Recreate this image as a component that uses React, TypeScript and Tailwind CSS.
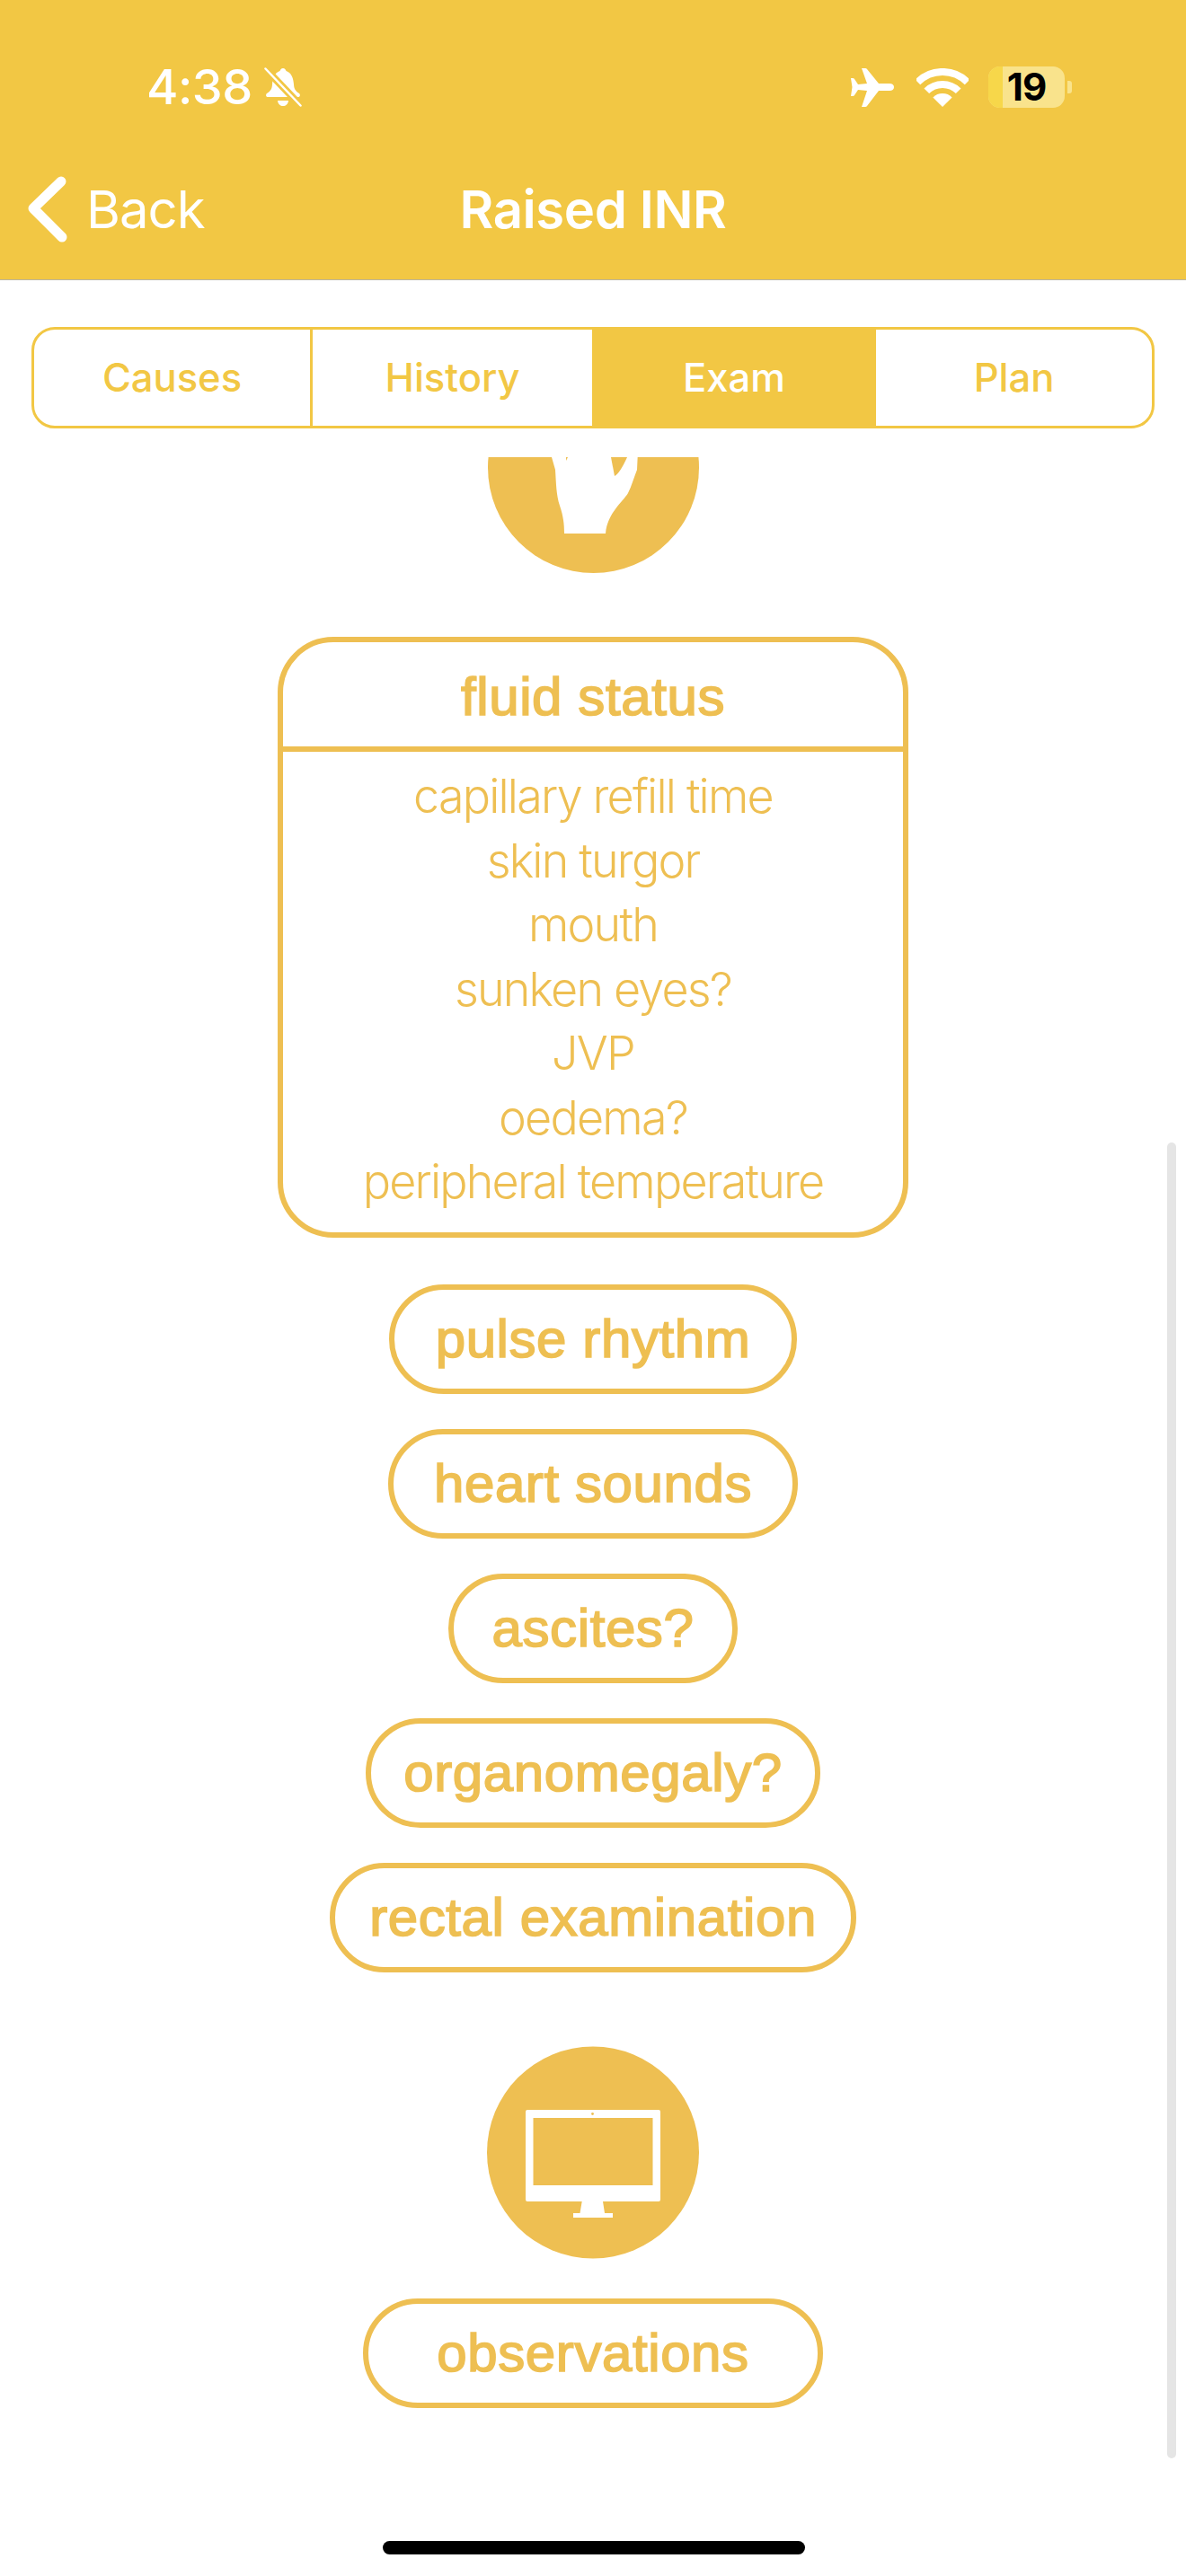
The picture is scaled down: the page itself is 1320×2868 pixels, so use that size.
const items = ["capillary refill time", "skin turgor", "mouth", "sunken eyes?", "JVP", "oedema?", "peripheral temperature"];

function Pill({ label, w, className = "" }: { label: string; w: string; className?: string }) {
  return (
    <div className={`${w} h-[122px] rounded-[61px] border-[6px] border-[#EEBF52] flex items-center justify-center text-[60px] font-['Liberation_Sans',sans-serif] font-normal tracking-[0.6px] [-webkit-text-stroke:1.7px_#EEBF52] text-[#EEBF52] ${className}`}>
      {label}
    </div>
  );
}

function Bell() {
  return (
    <svg width="42" height="44" viewBox="0 0 42 44" className="ml-[13px]">
      <path fill="#fff" d="M21 1c2 0 3 1.500 3.500 3c6 2 8 8 8.500 15c.3 5 1.500 7 6 10c1.500 1.500 1 4-1 4L4 33c-2 0-2.500-2.500-1-4c4.500-3 5.700-5 6-10c.5-7 2.500-13 8.500-15c.5-1.500 1.500-3 3.500-3Z" />
      <path fill="#fff" d="M15 37h12c-.5 4-3 6-6 6s-5.500-2-6-6Z" />
      <line x1="1" y1="1" x2="41" y2="43" stroke="#F2C744" strokeWidth="8" />
      <line x1="1.500" y1="1.500" x2="40.500" y2="42.500" stroke="#fff" strokeWidth="2.500" strokeLinecap="round" />
    </svg>
  );
}

function Plane() {
  return (
    <svg width="49" height="44" viewBox="0 0 49 44">
      <path fill="#fff" d="M48 22c0 2.500-2 4-5 4L31 26L18 43q-.5 1-2 1L12 44L18 26L8 25L4 31Q3.500 32 2 32L0 32L1.500 22L0 12L2 12Q3.500 12 4 13L8 19L18 18L12 1L16 1Q17.500 1 18 2L31 18L43 18c3 0 5 1.500 5 4Z" />
    </svg>
  );
}

function Wifi() {
  return (
    <svg width="58" height="43" viewBox="0 0 58 43">
      <path fill="none" stroke="#fff" strokeWidth="8" d="M1.400 15.400A39 39 0 0 1 56.600 15.400" />
      <path fill="none" stroke="#fff" strokeWidth="8" d="M11.300 25.300A25 25 0 0 1 46.700 25.300" />
      <path fill="#fff" d="M29 43L18.400 32.400A15 15 0 0 1 39.600 32.400Z" />
    </svg>
  );
}

function Battery() {
  return (
    <div className="flex items-center gap-[3px]">
      <div className="relative w-[85px] h-[46px] rounded-[13px] bg-[#F9E38C] flex items-center justify-center">
        <div className="absolute left-0 top-0 bottom-0 w-[16px] rounded-l-[13px] bg-[#F7D74A]" />
        <span className="relative text-[42px] font-bold text-black font-['Inter',sans-serif] leading-[46px] tracking-[-1px]">19</span>
      </div>
      <div className="w-[5px] h-[14px] rounded-r-[3px] bg-[#F9E38C]" />
    </div>
  );
}

function Chevron() {
  return (
    <svg width="45" height="76" viewBox="0 0 45 76" className="ml-[31px]">
      <polyline points="37,7 6,37 38,69" fill="none" stroke="#fff" strokeWidth="11" strokeLinecap="round" strokeLinejoin="round" />
    </svg>
  );
}

function HandCircle() {
  return (
    <svg width="235" height="235" viewBox="0 0 235 235" className="-mt-[106px] shrink-0">
      <circle cx="117.500" cy="117.500" r="117.500" fill="#EEBF52" />
      <path fill="#fff" d="M85 191C85 180 84 172 80 160C76 148 76 135 75 120L71 106L66 77L168 77L166 120C162 130 160 138 156 146C150 156 133 168 131 191Z" />
      <path fill="#EEBF52" d="M137 106L141 127C145 125 150 117 155 106L148 77L133 77Z" />
      <path fill="#EEBF52" d="M85 106L89 106L87 110L87 95Z" />
    </svg>
  );
}

function MonitorCircle() {
  return (
    <svg width="236" height="237" viewBox="0 0 236 237" className="mt-[82px] shrink-0">
      <circle cx="118" cy="118.500" r="118" fill="#EEBF52" />
      <path fill="#fff" fillRule="evenodd" d="M45 71H191a2 2 0 0 1 2 2V171a2 2 0 0 1-2 2H45a2 2 0 0 1-2-2V73a2 2 0 0 1 2-2ZM51.500 80V155H184.500V80Z" />
      <path fill="#fff" d="M105.700 173H129L131 186H140V191H96V186H103.500Z" />
      <circle cx="117.500" cy="75.500" r="1.400" fill="#EEBF52" />
    </svg>
  );
}

export default function App() {
  return (
    <div className="relative w-[1320px] h-[2868px] bg-white overflow-hidden flex flex-col font-['Inter',sans-serif]">
      <header className="h-[312px] shrink-0 bg-[#F2C744] border-b border-b-[#b9b4a2] pt-[57px] text-white">
        <div className="h-[80px] flex items-center justify-between pl-[163px] pr-[127px]">
          <div className="flex items-center">
            <span className="text-[54px] font-medium leading-none tracking-[-0.5px]">4:38</span>
            <Bell />
          </div>
          <div className="flex items-center">
            <Plane />
            <div className="ml-[24px]"><Wifi /></div>
            <div className="ml-[22px]"><Battery /></div>
          </div>
        </div>
        <div className="mt-[56px] h-[80px] grid grid-cols-[1fr_auto_1fr] items-center">
          <div className="flex items-center">
            <Chevron />
            <span className="ml-[20px] text-[58px] font-normal leading-none tracking-[-1px]">Back</span>
          </div>
          <span className="text-[58px] font-semibold leading-none tracking-[-0.4px]">Raised INR</span>
          <div />
        </div>
      </header>

      <div className="shrink-0 px-[35px] pt-[52px] pb-[32px]">
        <div className="h-[113px] grid grid-cols-[307px_314px_316px_1fr] rounded-[26px] border-[3px] border-[#F2C744] overflow-hidden text-[43.500px] font-medium text-[#F2C744]">
          <div className="flex items-center justify-center">Causes</div>
          <div className="flex items-center justify-center border-l-[3px] border-l-[#F2C744]">History</div>
          <div className="flex items-center justify-center bg-[#F2C744] text-white">Exam</div>
          <div className="flex items-center justify-center">Plan</div>
        </div>
      </div>

      <main className="flex-1 min-h-0 overflow-hidden flex flex-col items-center">
        <HandCircle />

        <section className="mt-[71px] w-[702px] shrink-0 rounded-[62px] border-[6px] border-[#EEBF52] text-[#EEBF52] flex flex-col items-center">
          <div className="w-full h-[122px] pt-[5px] flex items-center justify-center border-b-[6px] border-b-[#EEBF52] text-[60px] tracking-[0.6px] [-webkit-text-stroke:1.7px_#EEBF52] font-['Liberation_Sans',sans-serif]">
            fluid status
          </div>
          <ul className="pt-[14px] pb-[20px] text-center text-[52px] font-light leading-[71.500px] font-['Inter',sans-serif] tracking-[-1.800px]">
            {items.map((t) => (
              <li key={t}>{t}</li>
            ))}
          </ul>
        </section>

        <div className="mt-[52px] flex flex-col items-center gap-[39px]">
          <Pill label="pulse rhythm" w="w-[454px]" />
          <Pill label="heart sounds" w="w-[456px]" />
          <Pill label="ascites?" w="w-[322px]" />
          <Pill label="organomegaly?" w="w-[506px]" />
          <Pill label="rectal examination" w="w-[586px]" />
        </div>

        <MonitorCircle />
        <Pill label="observations" w="w-[512px]" className="mt-[44px]" />
      </main>

      <div className="absolute left-[1299px] top-[1272px] w-[10px] h-[1465px] rounded-full bg-[#E5E5E5]" />
      <div className="absolute left-[426px] top-[2829px] w-[470px] h-[15px] rounded-full bg-black" />
    </div>
  );
}
